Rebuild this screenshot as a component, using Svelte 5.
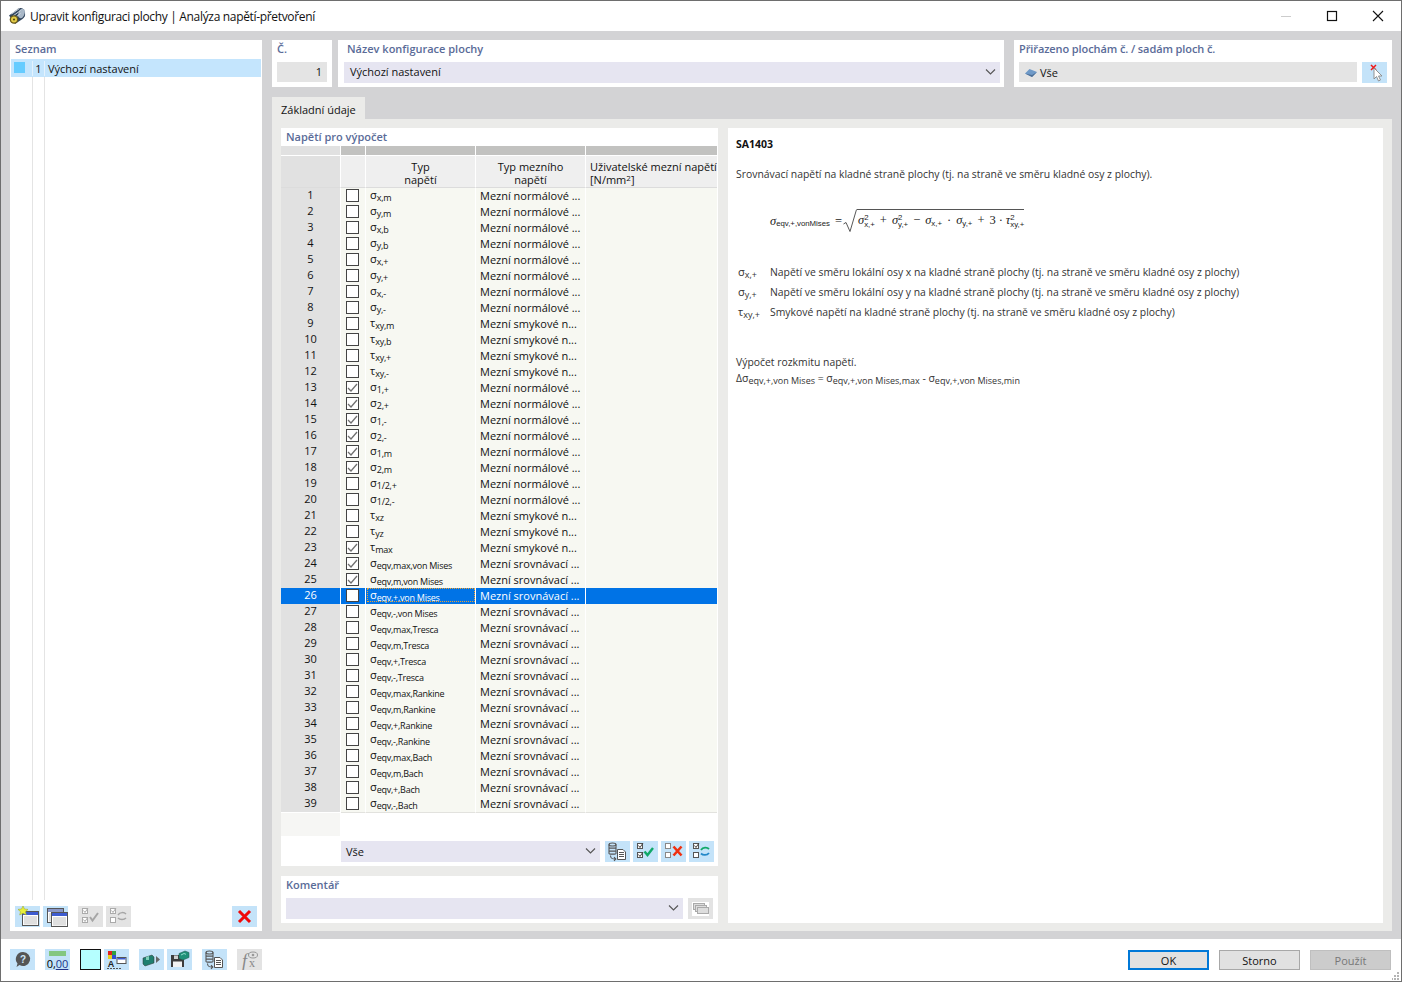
<script>
  const N = 'Mezní normálové ...';
  const S = 'Mezní smykové n...';
  const E = 'Mezní srovnávací ...';

  const base = [
    ['σ', 'x,m', N], ['σ', 'y,m', N], ['σ', 'x,b', N], ['σ', 'y,b', N],
    ['σ', 'x,+', N], ['σ', 'y,+', N], ['σ', 'x,-', N], ['σ', 'y,-', N],
    ['τ', 'xy,m', S], ['τ', 'xy,b', S], ['τ', 'xy,+', S], ['τ', 'xy,-', S],
    ['σ', '1,+', N], ['σ', '2,+', N], ['σ', '1,-', N], ['σ', '2,-', N],
    ['σ', '1,m', N], ['σ', '2,m', N], ['σ', '1/2,+', N], ['σ', '1/2,-', N],
    ['τ', 'xz', S], ['τ', 'yz', S], ['τ', 'max', S]
  ];
  for (const name of ['von Mises', 'Tresca', 'Rankine', 'Bach']) {
    for (const k of ['max', 'm', '+', '-']) base.push(['σ', `eqv,${k},${name}`, E]);
  }
  const checked = [13, 14, 15, 16, 17, 18, 23, 24, 25];
  const rows = base.map((r, i) => ({
    no: i + 1,
    sym: r[0],
    sub: r[1],
    type: r[2],
    on: checked.includes(i + 1),
    selected: i + 1 === 26
  }));
</script>

{#snippet chevron()}
  <svg class="chev" width="11" height="6" viewBox="0 0 11 6"><path d="M1 .5l4.5 4.5L10 .5" fill="none" stroke="#555" stroke-width="1.1"/></svg>
{/snippet}

{#snippet windowIcon(x, y, fill)}
  <rect x={x} y={y} width="16" height="14" fill="#fff" stroke="#555"/>
  <rect x={x + .5} y={y + .5} width="15" height="3" fill={fill}/>
  <rect x={x + 1.5} y={y + 4.5} width="13" height="8.5" fill="#dfdfdf"/>
{/snippet}

{#snippet dbDoc(color)}
  <svg width="25" height="21" viewBox="0 0 25 21">
    <g fill="none" stroke={color} stroke-width="1.1">
      <ellipse cx="7.500" cy="3.500" rx="3.500" ry="1.500"/>
      <path d="M4 3.500v9c0 1 7 1 7 0v-9M4 6.500c0 1 7 1 7 0M4 9.500c0 1 7 1 7 0"/>
      <path d="M5.500 14.500c0 3 1.500 3.500 5 3.500M9 16.200l1.800 1.800-1.800 1.800"/>
    </g>
    <path d="M12.500 8.500h5.500l2.500 2.500v7.500h-8z" fill="#fff" stroke={color}/>
    <path d="M14 11.500h5M14 13.500h5M14 15.500h5" stroke={color}/>
  </svg>
{/snippet}

{#snippet checks(c1, c2)}
  <rect x="4.500" y="2.500" width="5" height="5" fill="#fff" stroke={c1}/>
  <rect x="4.500" y="11.500" width="5" height="5" fill="#fff" stroke={c1}/>
  {#if c2}
    <path d="M5.500 4.500l1.500 2 3-4.500M5.500 13.500l1.500 2 3-4.500" fill="none" stroke={c2} stroke-width="1"/>
  {/if}
{/snippet}

<div class="win">
  <header class="title">
    <svg width="18" height="18" viewBox="0 0 18 18">
      <path d="M1 8.500L10.500 1.500c3-1.500 6 .5 6.500 4s-.5 5-2.500 6.500L7 17z" fill="#33475f"/>
      <ellipse cx="13.500" cy="6.500" rx="3" ry="4.800" transform="rotate(20 13.500 6.500)" fill="#a9b8c8"/>
      <path d="M3.500 7l8-5.500M5 9l7.500-5.500M6.500 11l6-4.500" stroke="#d9e1e8" stroke-width=".9"/>
      <circle cx="6" cy="12.500" r="4.300" fill="#6b5a18"/>
      <circle cx="6" cy="12.500" r="3" fill="#e3cc48"/>
      <circle cx="6" cy="12.500" r="1.100" fill="#5a4c14"/>
    </svg>
    <span class="title-text">Upravit konfiguraci plochy | Analýza napětí-přetvoření</span>
    <div class="win-btns">
      <svg width="12" height="12" viewBox="0 0 12 12"><path d="M1 6.500h10" stroke="#ccc"/></svg>
      <svg width="12" height="12" viewBox="0 0 12 12"><rect x="1.500" y="1.500" width="9" height="9" fill="none" stroke="#111" stroke-width="1.200"/></svg>
      <svg width="12" height="12" viewBox="0 0 12 12"><path d="M1 1l10 10M11 1L1 11" stroke="#111" stroke-width="1.100"/></svg>
    </div>
  </header>

  <div class="main">
    <aside class="list-panel">
      <h4 class="cap list-cap">Seznam</h4>
      <div class="list-row">
        <span class="list-mark"><i></i></span>
        <span class="list-no">1</span>
        <span>Výchozí nastavení</span>
      </div>
      <div class="list-lines"><i></i><i></i></div>
      <div class="tools">
        <button class="ico">
          <svg width="25" height="21" viewBox="0 0 25 21">
            {@render windowIcon(7.5, 5.5, '#3d5bd0')}
            <path d="M8 0l1.500 3 3.500.4-2.500 2.300.8 3.300L8 7.300 4.700 9l.8-3.300L3 3.400 6.500 3z" fill="#e6ee3a" stroke="#98a020" stroke-width=".5"/>
          </svg>
        </button>
        <button class="ico">
          <svg width="25" height="21" viewBox="0 0 25 21">
            {@render windowIcon(4.5, 2.5, '#8a97c8')}
            {@render windowIcon(8.5, 6.5, '#3d5bd0')}
          </svg>
        </button>
        <button class="ico off gap-l">
          <svg width="25" height="21" viewBox="0 0 25 21">
            {@render checks('#aaa', '#aaa')}
            <path d="M12 11l2.500 3.500L20 7" fill="none" stroke="#a5a5a5" stroke-width="2"/>
          </svg>
        </button>
        <button class="ico off">
          <svg width="25" height="21" viewBox="0 0 25 21">
            {@render checks('#aaa', null)}
            <path d="M5.500 4.500l1.500 2 3-4.500" fill="none" stroke="#aaa"/>
            <path d="M12 9c2-3 6-3 8-1M20 12c-2 2-6 2-8 0" fill="none" stroke="#a5a5a5" stroke-width="1.500"/>
          </svg>
        </button>
        <button class="ico push">
          <svg width="25" height="21" viewBox="0 0 25 21"><path d="M7 5l11 11M18 5L7 16" stroke="#f00808" stroke-width="3"/></svg>
        </button>
      </div>
    </aside>

    <section class="right">
      <div class="top">
        <div class="box no-box">
          <h4 class="cap">Č.</h4>
          <div class="field num">1</div>
        </div>
        <div class="box name-box">
          <h4 class="cap">Název konfigurace plochy</h4>
          <div class="combo">Výchozí nastavení {@render chevron()}</div>
        </div>
        <div class="box assign-box">
          <h4 class="cap">Přiřazeno plochám č. / sadám ploch č.</h4>
          <div class="assign">
            <div class="field all">
              <svg width="12" height="8" viewBox="0 0 12 8"><path d="M0 4.500L4.500 0 12 3 7 8z" fill="#6f9ac8"/><path d="M0 4.500L7 8l5-5-5 3z" fill="#4d6f96"/></svg>
              Vše
            </div>
            <button class="ico">
              <svg width="25" height="21" viewBox="0 0 25 21">
                <path d="M9 3l5 5M14 3L9 8" stroke="#f01818" stroke-width="1.500"/>
                <path d="M12 6v11l2.500-2.500 2 4.500 2-1-2-4h3.500z" fill="#fff" stroke="#888" stroke-width=".9"/>
              </svg>
            </button>
          </div>
        </div>
      </div>

      <div class="tab">Základní údaje</div>

      <div class="tab-body">
        <div class="left-col">
          <div class="table-panel">
            <h4 class="cap table-cap">Napětí pro výpočet</h4>
            <div class="strip"><i></i><i></i><i></i><i></i><i></i></div>
            <div class="head">
              <div class="h-no"></div>
              <div class="h-ck"></div>
              <div class="h-c">Typ<br>napětí</div>
              <div class="h-c">Typ mezního<br>napětí</div>
              <div class="h-u">Uživatelské mezní napětí<br>[N/mm<span class="sq">2</span>]</div>
            </div>
            {#each rows as r (r.no)}
              <div class="row" class:selected={r.selected}>
                <div class="c-no">{r.no}</div>
                <div class="c-ck">
                  <span class="box-ck">
                    {#if r.on}
                      <svg width="11" height="10" viewBox="0 0 11 10"><path d="M1 5l3 3 6-7" fill="none" stroke="#707070" stroke-width="1.300"/></svg>
                    {/if}
                  </span>
                </div>
                <div class="c-sym"><span class="sym-in">{r.sym}<sub>{r.sub}</sub></span></div>
                <div class="c-type">{r.type}</div>
                <div class="c-user"></div>
              </div>
            {/each}
            <div class="table-rest"></div>
            <div class="table-tools">
              <div class="combo grow">Vše {@render chevron()}</div>
              <button class="ico first">{@render dbDoc('#555')}</button>
              <button class="ico">
                <svg width="25" height="21" viewBox="0 0 25 21">
                  {@render checks('#555', '#444')}
                  <path d="M11.500 10.500l3 3.500L20 7" fill="none" stroke="#10a868" stroke-width="2.400"/>
                </svg>
              </button>
              <button class="ico">
                <svg width="25" height="21" viewBox="0 0 25 21">
                  {@render checks('#888', null)}
                  <path d="M12.500 5.500l8 9M20.500 5.500l-8 9" stroke="#f03010" stroke-width="2.600"/>
                </svg>
              </button>
              <button class="ico">
                <svg width="25" height="21" viewBox="0 0 25 21">
                  {@render checks('#555', null)}
                  <path d="M5.500 4.500l1.500 2 3-4.500" fill="none" stroke="#444"/>
                  <path d="M12 9c2-3 6-3 8-1" fill="none" stroke="#10a868" stroke-width="1.800"/>
                  <path d="M20 12c-2 2.500-6 2.500-8 .5" fill="none" stroke="#2488c8" stroke-width="1.800"/>
                </svg>
              </button>
            </div>
          </div>

          <div class="comment-panel">
            <h4 class="cap">Komentář</h4>
            <div class="comment-row">
              <div class="combo grow">&nbsp;{@render chevron()}</div>
              <button class="ico off">
                <svg width="25" height="21" viewBox="0 0 25 21">
                  <rect x="4" y="4" width="17" height="14" fill="#fff"/>
                  <rect x="5.500" y="5.500" width="11" height="6" fill="#ddd" stroke="#aaa"/>
                  <rect x="7.500" y="7.500" width="11" height="6" fill="#ddd" stroke="#aaa"/>
                  <rect x="9.500" y="9.500" width="11" height="6" fill="#ddd" stroke="#aaa"/>
                </svg>
              </button>
            </div>
          </div>
        </div>

        <article class="desc">
          <h3>SA1403</h3>
          <p class="intro">Srovnávací napětí na kladné straně plochy (tj. na straně ve směru kladné osy z plochy).</p>

          <div class="formula">
            <span class="m">σ</span><span class="f-sub">eqv,+,vonMises</span>
            <span class="eq">=</span>
            <svg class="root" width="14" height="24" viewBox="0 0 14 24"><path d="M.5 15l2.500-1.500 4 9L13.500 .5" fill="none" stroke="#444" stroke-width=".9"/></svg>
            <span class="radicand">
              <span class="m">σ</span><span class="pair"><sup>2</sup><sub>x,+</sub></span>
              <span class="op">+</span>
              <span class="m">σ</span><span class="pair"><sup>2</sup><sub>y,+</sub></span>
              <span class="op">−</span>
              <span class="m">σ</span><span class="f-s2">x,+</span>
              <span class="op">·</span>
              <span class="m">σ</span><span class="f-s2">y,+</span>
              <span class="op">+</span>
              <span>3</span>
              <span class="op tight">·</span>
              <span class="m">τ</span><span class="pair"><sup>2</sup><sub>xy,+</sub></span>
            </span>
          </div>

          <dl class="defs">
            <dt>σ<sub>x,+</sub></dt>
            <dd>Napětí ve směru lokální osy x na kladné straně plochy (tj. na straně ve směru kladné osy z plochy)</dd>
            <dt>σ<sub>y,+</sub></dt>
            <dd>Napětí ve směru lokální osy y na kladné straně plochy (tj. na straně ve směru kladné osy z plochy)</dd>
            <dt>τ<sub>xy,+</sub></dt>
            <dd>Smykové napětí na kladné straně plochy (tj. na straně ve směru kladné osy z plochy)</dd>
          </dl>

          <p class="range">Výpočet rozkmitu napětí.</p>
          <p class="range-f">Δσ<sub>eqv,+,von Mises</sub> = σ<sub>eqv,+,von Mises,max</sub> - σ<sub>eqv,+,von Mises,min</sub></p>
        </article>
      </div>
    </section>
  </div>

  <footer class="foot">
    <button class="ico">
      <svg width="25" height="21" viewBox="0 0 25 21">
        <path d="M13 3a7 7 0 1 1-3.500 13l-3 2 1-3.500A7 7 0 0 1 13 3z" fill="#555"/>
        <text x="13" y="14" font-size="10" font-weight="700" text-anchor="middle" fill="#cfe6f8" font-family="Liberation Sans">?</text>
      </svg>
    </button>
    <button class="ico l10 units">
      <span class="ruler"></span>
      <span class="zero">0,<u>00</u></span>
    </button>
    <span class="swatch l10"></span>
    <button class="ico l3">
      <svg width="25" height="21" viewBox="0 0 25 21">
        <rect x="4" y="2" width="4" height="4" fill="#e02020"/><rect x="8" y="2" width="4" height="4" fill="#30a040"/>
        <rect x="4" y="6" width="4" height="4" fill="#e8d020"/><rect x="8" y="6" width="4" height="4" fill="#3050d0"/>
        <rect x="13" y="8.500" width="9" height="6" fill="#fff" stroke="#555"/><rect x="13.500" y="9" width="8" height="1.500" fill="#3d5bd0"/>
        <text x="7" y="18" font-size="9" font-weight="700" text-anchor="middle" fill="#222" font-family="Liberation Sans">A</text>
        <path d="M3 19.500h15" stroke="#555" stroke-dasharray="2 1"/>
      </svg>
    </button>
    <button class="ico l10">
      <svg width="25" height="21" viewBox="0 0 25 21">
        <path d="M4 9l9-3 2 2v6l-9 3-2-2z" fill="#1f7f70" stroke="#333" stroke-width=".5"/>
        <path d="M7 8v3h3V7z" fill="#7fd0b8"/>
        <path d="M17 7l4 3.500-4 3.500z" fill="#666"/>
      </svg>
    </button>
    <button class="ico l3">
      <svg width="25" height="21" viewBox="0 0 25 21">
        <path d="M4 6h11l2 2v10H4z" fill="#3c3c3c"/>
        <rect x="7" y="6.500" width="4" height="3.500" fill="#cfcfcf"/>
        <rect x="6" y="12.500" width="9" height="5.500" fill="#f2f2f2"/>
        <path d="M12 4.500l6-2.500 4 1.500v5l-6 2.500-4-1.500z" fill="#1f8f78" stroke="#25544c" stroke-width=".5"/>
        <path d="M14 6l3-1.500 2 .8" fill="none" stroke="#8fdcc8"/>
      </svg>
    </button>
    <button class="ico l10">{@render dbDoc('#555')}</button>
    <button class="ico off l10">
      <svg width="25" height="21" viewBox="0 0 25 21">
        <text x="5" y="18" font-size="18" font-style="italic" fill="#888" font-family="Liberation Serif">f</text>
        <text x="12" y="18" font-size="12" fill="#888" font-family="Liberation Serif">x</text>
        <ellipse cx="16" cy="6" rx="4.500" ry="3" fill="none" stroke="#999"/><circle cx="16" cy="6" r="1.300" fill="#999"/>
      </svg>
    </button>

    <div class="actions">
      <button class="btn ok">OK</button>
      <button class="btn">Storno</button>
      <button class="btn dim">Použít</button>
    </div>

    <svg class="grip" width="8" height="8" viewBox="0 0 8 8" fill="#b4b4b4">
      <rect x="5" y="0" width="2" height="2"/>
      <rect x="2" y="3" width="2" height="2"/><rect x="5" y="3" width="2" height="2"/>
      <rect x="-1" y="6" width="2" height="2"/><rect x="2" y="6" width="2" height="2"/><rect x="5" y="6" width="2" height="2"/>
    </svg>
  </footer>
</div>

<style>
  :global(body) {
    margin: 0;
    background: #fff;
  }

  .win {
    box-sizing: border-box;
    width: 1402px;
    height: 982px;
    display: flex;
    flex-direction: column;
    border: 1px solid #6e6e6e;
    font-family: "Open Sans", "Noto Sans", sans-serif;
    font-size: 11px;
    color: #111;
    overflow: hidden;
  }

  .title {
    flex: 0 0 30px;
    display: flex;
    align-items: center;
    padding-left: 7px;
    background: #fff;
  }

  .title-text {
    margin-left: 4px;
    font-size: 12px;
    letter-spacing: -.33px;
  }

  .win-btns {
    margin-left: auto;
    display: flex;
    gap: 34px;
    padding-right: 17px;
  }

  .main {
    flex: 1;
    min-height: 0;
    display: flex;
    gap: 10px;
    padding: 9px 9px 8px 9px;
    background: #d3d3d5;
  }

  .list-panel {
    width: 252px;
    display: flex;
    flex-direction: column;
    background: #fff;
  }

  .cap {
    margin: 0;
    font-size: 11px;
    line-height: 14px;
    font-weight: 600;
    color: #5a6b98;
  }

  .list-cap {
    padding: 2px 5px 3px;
  }

  .list-row {
    margin: 0 1px;
    height: 18px;
    display: flex;
    align-items: center;
    background: #c4e5fd;
  }

  .list-mark {
    width: 21px;
    padding-left: 3px;
    box-sizing: border-box;
    display: flex;
  }

  .list-mark i {
    width: 11px;
    height: 11px;
    margin-top: -2px;
    background: #66ccff;
  }

  .list-no {
    box-sizing: border-box;
    width: 13px;
    margin-right: 3px;
    text-align: center;
    border-left: 1px solid #e4f2fd;
    border-right: 1px solid #e4f2fd;
  }

  .list-lines {
    flex: 1;
    display: flex;
    padding-left: 22px;
    gap: 11px;
  }

  .list-lines i {
    width: 1px;
    background: #e4e4e4;
  }

  .tools {
    display: flex;
    gap: 3px;
    padding: 6px 5px 4px;
  }

  .gap-l {
    margin-left: 7px;
  }

  .push {
    margin-left: auto;
  }

  .ico {
    flex: none;
    width: 25px;
    height: 21px;
    padding: 0;
    border: 0;
    background: #c4e3f9;
    display: block;
    font: inherit;
  }

  .ico svg {
    display: block;
  }

  .ico.off {
    background: #e3e3e3;
  }

  .right {
    flex: 1;
    min-width: 0;
    display: flex;
    flex-direction: column;
  }

  .top {
    display: flex;
    height: 47px;
  }

  .box {
    box-sizing: border-box;
    background: #fff;
    padding: 2px 5px 0;
  }

  .no-box {
    width: 60px;
  }

  .name-box {
    width: 666px;
    margin-left: 6px;
    padding: 2px 4px 0 6px;
  }

  .assign-box {
    width: 378px;
    margin-left: 10px;
  }

  .assign-box .cap {
    letter-spacing: -.1px;
  }

  .box .cap {
    height: 20px;
    line-height: 13px;
  }

  .field {
    height: 20px;
    line-height: 20px;
    background: #e4e4e4;
  }

  .num {
    text-align: right;
    padding-right: 5px;
  }

  .name-box .cap {
    padding-left: 3px;
  }

  .combo {
    height: 21px;
    line-height: 20px;
    padding-left: 6px;
    position: relative;
    background: #e6e5f1;
  }

  .chev {
    position: absolute;
    right: 4px;
    top: 7px;
  }

  .assign {
    display: flex;
    gap: 5px;
  }

  .all {
    flex: 1;
    display: flex;
    align-items: center;
    gap: 3px;
    padding: 1px 0 0 6px;
    box-sizing: border-box;
  }

  .tab {
    box-sizing: border-box;
    width: 93px;
    height: 22px;
    margin-top: 10px;
    padding: 2px 0 0 9px;
    line-height: 22px;
    background: #ebebe9;
  }

  .tab-body {
    flex: 1;
    min-height: 0;
    display: flex;
    gap: 10px;
    padding: 9px 9px 8px;
    background: #ebebe9;
  }

  .left-col {
    width: 437px;
    display: flex;
    flex-direction: column;
    gap: 10px;
  }

  .table-panel {
    height: 738px;
    background: #fff;
  }

  .table-cap {
    height: 18px;
    line-height: 18px;
    padding-left: 5px;
    font-size: 11px;
  }

  .strip {
    display: grid;
    grid-template-columns: 59px 24px 109px 109px 131px;
    column-gap: 1px;
    height: 9px;
    margin: 0 1px 1px 0;
  }

  .strip i {
    background: #c2c2c0;
  }

  .strip i:first-child {
    background: #e1e1e1;
  }

  .head,
  .row {
    display: grid;
    grid-template-columns: 60px 25px 110px 110px 131px;
    margin-right: 1px;
  }

  .head {
    height: 32px;
    line-height: 13px;
  }

  .head > div {
    box-sizing: border-box;
    border-bottom: 1px solid #dcdcdc;
  }

  .h-no {
    background: #e1e1e1;
    border-right: 1px solid #fff;
  }

  .h-ck {
    background: #efefef;
    border-right: 1px solid #fff;
  }

  .h-c {
    text-align: center;
    background: #efefef;
    border-right: 1px solid #fff;
    padding-top: 4px;
  }

  .h-u {
    background: #efefef;
    padding: 4px 0 0 4px;
    white-space: nowrap;
    overflow: hidden;
  }

  .sq {
    font-size: 8px;
    line-height: 0;
    vertical-align: 3px;
  }

  .row {
    height: 16px;
    line-height: 14px;
  }

  .row > div {
    box-sizing: border-box;
    border-bottom: 1px solid #e2e2de;
    background: #f7f8f2;
    white-space: nowrap;
  }

  .row .c-no {
    text-align: center;
    background: #e1e1e1;
    border-right: 1px solid #fff;
    border-bottom-color: #fff;
  }

  .row .c-ck {
    border-right: 1px solid #fff;
    padding: 1px 0 0 5px;
  }

  .box-ck {
    box-sizing: border-box;
    display: block;
    width: 13px;
    height: 13px;
    border: 1px solid #444;
    background: #fff;
  }

  .box-ck svg {
    display: block;
    margin-top: .5px;
  }

  .row .c-sym {
    padding-left: 4px;
    border-right: 1px solid #fff;
    font-size: 11px;
    line-height: 14px;
  }

  .sym-in {
    display: block;
    height: 14px;
  }

  .sym-in sub {
    font-size: 9px;
    line-height: 0;
    vertical-align: -2px;
    letter-spacing: -.25px;
  }

  .row .c-type {
    padding: 0 0 0 4px;
    line-height: 16px;
    border-right: 1px solid #fff;
  }

  .row.selected > div {
    background: #0073e6;
    color: #fff;
    border-bottom-color: #fff;
  }

  .row.selected .sym-in {
    margin: 0 0 0 -3px;
    padding-left: 3px;
    outline: 1px dotted #f0a030;
    outline-offset: -1px;
  }

  .table-rest {
    width: 59px;
    height: 24px;
    background: #f6f6f4;
  }

  .table-tools {
    display: flex;
    gap: 3px;
    padding: 5px 4px 0 60px;
  }

  .table-tools .combo {
    padding-left: 5px;
    line-height: 22px;
  }

  .grow {
    flex: 1;
  }

  .first {
    margin-left: 2px;
  }

  .comment-panel {
    height: 47px;
    box-sizing: border-box;
    padding: 2px 5px 0;
    background: #fff;
  }

  .comment-panel .cap {
    height: 20px;
    line-height: 13px;
  }

  .comment-row {
    display: flex;
    gap: 5px;
  }

  .desc {
    flex: 1;
    box-sizing: border-box;
    padding: 9px 8px;
    background: #fff;
    font-size: 10.400px;
    color: #333;
  }

  .desc h3 {
    margin: 0;
    font-size: 10.500px;
    line-height: 14px;
    font-weight: 700;
    color: #111;
  }

  .intro {
    margin: 16px 0 0;
    line-height: 14px;
  }

  .formula {
    margin: 28px 0 0 34px;
    height: 24px;
    display: flex;
    align-items: center;
    font-family: "Liberation Serif", serif;
    font-size: 12.500px;
    color: #222;
  }

  .m {
    font-style: italic;
  }

  .f-sub {
    font-family: "Liberation Sans", sans-serif;
    font-size: 7.800px;
    margin-top: 4px;
  }

  .eq {
    margin: 0 1px 0 5px;
  }

  .radicand {
    display: flex;
    align-items: center;
    height: 21px;
    border-top: 1px solid #555;
    margin-top: -2px;
    padding-left: 1px;
  }

  .pair {
    display: inline-flex;
    flex-direction: column;
    font-family: "Liberation Sans", sans-serif;
    font-size: 7.800px;
    line-height: 7px;
  }

  .pair sub,
  .pair sup {
    font-size: 7.800px;
    line-height: 7px;
    vertical-align: baseline;
  }

  .f-s2 {
    font-family: "Liberation Sans", sans-serif;
    font-size: 7.800px;
    margin-top: 5px;
  }

  .op {
    margin: 0 5px;
  }

  .op.tight {
    margin: 0 3px;
  }

  .defs {
    margin: 32px 0 0 2px;
    display: grid;
    grid-template-columns: 32px 1fr;
    row-gap: 6px;
    line-height: 14px;
  }

  .defs dt {
    margin: 0;
    font-size: 11px;
  }

  .defs dt sub,
  .range-f sub {
    font-size: 9px;
    line-height: 0;
    vertical-align: -2px;
  }

  .defs dd {
    margin: 0;
    white-space: nowrap;
  }

  .range {
    margin: 36px 0 0;
    line-height: 14px;
  }

  .range-f {
    margin: 2px 0 0;
    line-height: 14px;
  }

  .foot {
    position: relative;
    flex: 0 0 42px;
    display: flex;
    align-items: flex-start;
    padding: 10px 10px 0 9px;
    background: #fff;
    box-sizing: border-box;
  }

  .l10 {
    margin-left: 10px;
  }

  .l3 {
    margin-left: 3px;
  }

  .units {
    display: flex;
    flex-direction: column;
    align-items: center;
    font-size: 11px;
    line-height: 11px;
  }

  .ruler {
    width: 17px;
    height: 5px;
    margin-top: 2px;
    background: #84c780;
  }

  .zero {
    margin-top: 2px;
  }

  .zero u {
    color: #223388;
  }

  .swatch {
    box-sizing: border-box;
    width: 21px;
    height: 21px;
    border: 1px solid #111;
    background: #b5ffff;
  }

  .actions {
    margin-left: auto;
    margin-top: 1px;
    display: flex;
    gap: 10px;
  }

  .btn {
    box-sizing: border-box;
    width: 81px;
    height: 20px;
    padding: 0;
    border: 1px solid #a8a8a8;
    background: #e1e1e1;
    font: inherit;
    font-size: 11px;
    color: #111;
  }

  .ok {
    border: 2px solid #0078d7;
  }

  .dim {
    background: #cccccc;
    border-color: #bfbfbf;
    color: #777;
  }

  .grip {
    position: absolute;
    right: 1px;
    bottom: 1px;
  }
</style>
